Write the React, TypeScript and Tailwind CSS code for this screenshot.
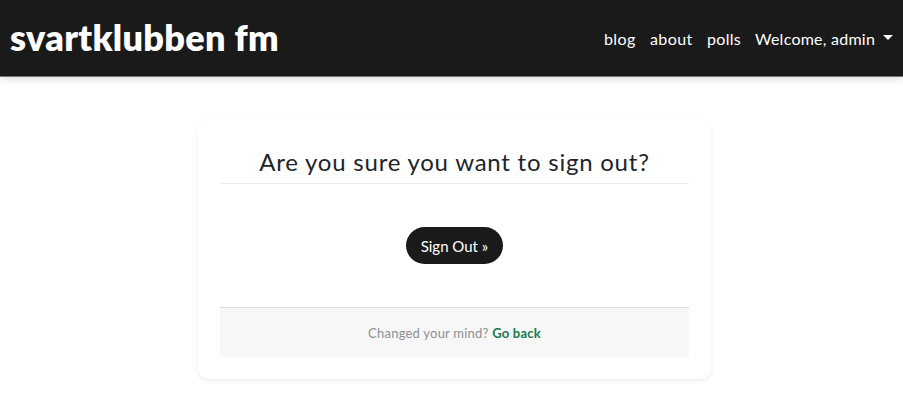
const links = [
  { label: "blog", style: "w-[46px] tracking-[0.4px]" },
  { label: "about", style: "w-[57px] tracking-[0.4px]" },
  { label: "polls", style: "w-[48px] tracking-[0.3px]" },
];

function Header() {
  return (
    <header className="flex h-[77px] items-center border-b border-[#777374] bg-[#1a1a1a] pb-[2px] pl-[10px] text-white shadow-[0_2px_8px_rgba(0,0,0,0.13)]">
      <a className="text-[36px] leading-none font-extrabold tracking-[0.32px] whitespace-nowrap">svartklubben fm</a>
      <nav className="ml-auto flex items-center pt-[3px] pr-[10px] text-[16px] leading-6 whitespace-nowrap">
        {links.map((link) => (
          <a key={link.label} className={link.style}>
            {link.label}
          </a>
        ))}
        <span className="w-[128px] tracking-[0.25px]">Welcome, admin</span>
        <span className="-mt-[3px] h-0 w-0 border-x-[5px] border-t-[5px] border-x-transparent border-t-white" />
      </nav>
    </header>
  );
}

export default function App() {
  return (
    <div className="min-h-[417px] bg-white font-['Lato','Open_Sans',sans-serif] text-[#212529]">
      <Header />
      <main className="ml-[198px] mt-[42px] h-[260px] w-[513px] rounded-[10px] bg-white px-[22px] pt-[27px] text-center shadow-[0_2px_4px_rgba(0,0,0,0.075)]">
        <h1 className="h-[38px] border-b border-[#eeeeee] text-[24px] leading-[31px] tracking-[0.77px] whitespace-nowrap">
          Are you sure you want to sign out?
        </h1>
        <button className="mx-auto mt-[43px] block h-[37px] w-[97px] rounded-full bg-[#1a1a1a] text-[15px] leading-[38px] whitespace-nowrap text-white">
          Sign Out »
        </button>
        <div className="mt-[43px] h-[50px] rounded-b-[2px] border-t border-[#dbdbdb] bg-[#f7f7f7] text-[13px] leading-[51px] tracking-[0.22px] whitespace-nowrap text-[#8c9094]">
          Changed your mind? <a className="font-bold text-[#187a4c]">Go back</a>
        </div>
      </main>
    </div>
  );
}
